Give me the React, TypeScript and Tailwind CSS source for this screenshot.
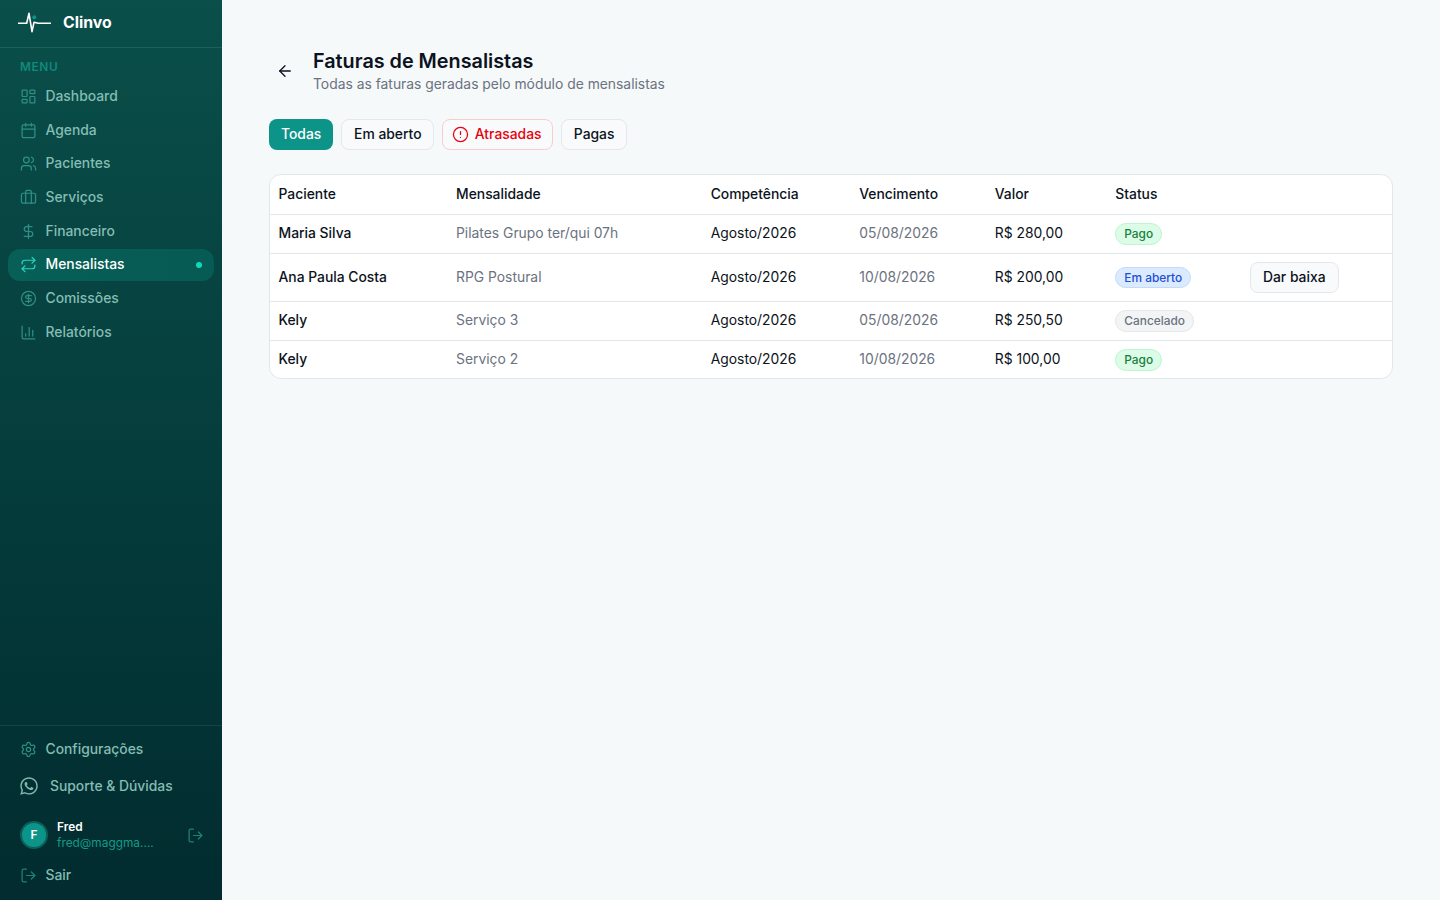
import { LayoutDashboard, Calendar, Users, Briefcase, DollarSign, Repeat, CircleDollarSign, ChartColumn, Settings, LogOut, ArrowLeft, CircleAlert } from "lucide-react";
import { FaWhatsapp } from "react-icons/fa";

const nav = [
  { label: "Dashboard", Icon: LayoutDashboard },
  { label: "Agenda", Icon: Calendar },
  { label: "Pacientes", Icon: Users },
  { label: "Serviços", Icon: Briefcase },
  { label: "Financeiro", Icon: DollarSign },
  { label: "Mensalistas", Icon: Repeat, active: true },
  { label: "Comissões", Icon: CircleDollarSign },
  { label: "Relatórios", Icon: ChartColumn },
];

const rows = [
  { p: "Maria Silva", m: "Pilates Grupo ter/qui 07h", v: "05/08/2026", val: "R$ 280,00", s: "Pago", h: "h-[39px]", t: "px-[8.5px]" },
  { p: "Ana Paula Costa", m: "RPG Postural", v: "10/08/2026", val: "R$ 200,00", s: "Em aberto", action: true, h: "h-[48px]", t: "px-[8.5px] pt-[1px]" },
  { p: "Kely", m: "Serviço 3", v: "05/08/2026", val: "R$ 250,50", s: "Cancelado", h: "h-[39px]", t: "px-[8.5px]" },
  { p: "Kely", m: "Serviço 2", v: "10/08/2026", val: "R$ 100,00", s: "Pago", h: "h-[38px]", t: "px-[8.5px] pt-[1px]" },
];

function Badge({ s }: { s: string }) {
  if (s === "Pago")
    return <span className="inline-flex h-[22px] items-center rounded-full border border-[#bbf7d0] bg-[#dcfce7] px-2 text-[11.88px] font-medium text-[#15803d]">{s}</span>;
  if (s === "Em aberto")
    return <span className="inline-flex h-[21px] items-center rounded-full border border-[#bfdbfe] bg-[#dbeafe] px-2 text-[11.88px] font-medium text-[#1d4ed8]">{s}</span>;
  return <span className="inline-flex h-[22px] items-center rounded-full border border-[#e5e7eb] bg-[#f3f4f6] px-2 text-[11.88px] font-medium text-[#6b7280]">{s}</span>;
}

export default function App() {
  return (
    <div className="flex h-[900px] w-[1440px] overflow-hidden bg-[#f6f9fa] font-['Inter',sans-serif] text-[#0b1220]">
      <aside className="flex h-full w-[222px] shrink-0 flex-col bg-gradient-to-b from-[#0a4f4a] to-[#022c2f]">
        <div className="flex h-[48px] items-center gap-3 border-b border-[#ffffff1a] pb-[1px] pl-[18px]">
          <svg width="33" height="22" viewBox="0 0 33 22" fill="none" stroke="white" strokeWidth="1.6" strokeLinejoin="round" strokeLinecap="round">
            <path d="M0.5 11.3H8.7L11 1.3L14 19.7L16 10.3L20.3 11.3H32.5" />
            <circle cx="16.3" cy="5.3" r="2" fill="#0d9488" stroke="none" />
          </svg>
          <span className="text-[15.84px] font-bold text-white">Clinvo</span>
        </div>
        <div className="px-2 pt-[11px]">
          <div className="mb-[5.7px] h-[16px] px-3 text-[11.88px] font-semibold leading-4 tracking-[0.6px] text-[#0f8a7c]">MENU</div>
          <nav className="flex flex-col gap-[2px]">
            {nav.map(({ label, Icon, active }) => (
              <div key={label} className={`flex h-[31.67px] items-center gap-[8.5px] rounded-xl pl-3 pr-3 text-[13.86px] font-medium ${active ? "bg-gradient-to-r from-[#075f57] to-[#065b54] text-white" : "text-[#84bdb3]"}`}>
                <Icon size={17} strokeWidth={1.75} className={active ? "text-[#2dd4bf]" : "text-[#2f8f84]"} />
                <span className="flex-1">{label}</span>
                {active && <span className="h-[6px] w-[6px] rounded-full bg-[#14d8b8]" />}
              </div>
            ))}
          </nav>
        </div>
        <div className="mt-auto border-t border-[#ffffff14] px-2 pt-[7px]">
          <div className="flex h-[32px] items-center gap-[8.5px] pl-3 text-[13.86px] font-medium text-[#84bdb3]">
            <Settings size={17} strokeWidth={1.75} className="text-[#2f8f84]" />
            Configurações
          </div>
          <div className="mt-[5px] flex h-[32px] items-center gap-[11px] pl-[11px] text-[13.86px] font-medium text-[#84bdb3]">
            <FaWhatsapp size={20} className="text-[#7fb8ae]" />
            Suporte &amp; Dúvidas
          </div>
          <div className="mt-[15px] flex h-[36px] items-center pl-[12px] pr-[10px]">
            <div className="flex h-[28px] w-[28px] items-center justify-center rounded-full border-2 border-[#0b5f58] bg-[#0d9488] text-[11.88px] font-semibold text-white">F</div>
            <div className="ml-[9px] flex-1 text-[11.88px] leading-4">
              <div className="font-semibold text-white">Fred</div>
              <div className="text-[#149a89]">fred@maggma....</div>
            </div>
            <LogOut size={17} strokeWidth={1.75} className="text-[#1f8176]" />
          </div>
          <div className="mt-[6px] mb-[9px] flex h-[32px] items-center gap-[8.5px] pl-3 text-[13.86px] font-medium text-[#84bdb3]">
            <LogOut size={17} strokeWidth={1.75} className="text-[#1f8176]" />
            Sair
          </div>
        </div>
      </aside>
      <main className="flex-1 pl-[47px] pr-[47px] pt-[47px]">
        <div className="flex items-center">
          <div className="flex w-[44px] items-center pl-[6.5px] pt-[1px]"><ArrowLeft size={18} strokeWidth={1.75} /></div>
          <div>
            <h1 className="text-[19.8px] font-semibold leading-[28px] text-[#0b1220]">Faturas de Mensalistas</h1>
            <p className="text-[13.86px] leading-[18px] text-[#6b7280]">Todas as faturas geradas pelo módulo de mensalistas</p>
          </div>
        </div>
        <div className="mt-[26px] flex items-center gap-[7.92px]">
          <button className="flex h-[31px] items-center rounded-lg bg-[#0d9488] px-[12px] text-[13.86px] font-medium text-white">Todas</button>
          <button className="flex h-[31px] items-center rounded-lg border border-[#e5e7eb] bg-[#f8fafc] px-[11.9px] text-[13.86px] font-medium">Em aberto</button>
          <button className="flex h-[31px] items-center gap-[5.5px] rounded-lg border border-[#fecaca] bg-[#f8fafc] pl-[9px] pr-[10.5px] text-[13.86px] font-medium text-[#e7000b]"><CircleAlert size={17} strokeWidth={1.75} />Atrasadas</button>
          <button className="flex h-[31px] items-center rounded-lg border border-[#e5e7eb] bg-[#f8fafc] px-[11.9px] text-[13.86px] font-medium">Pagas</button>
        </div>
        <div className="mt-[24px] w-[1124px] overflow-hidden rounded-xl border border-[#e2e8ea] bg-white">
          <table className="w-full table-fixed border-collapse text-[13.86px]">
            <colgroup>
              <col className="w-[177.5px]" />
              <col className="w-[254.7px]" />
              <col className="w-[148.6px]" />
              <col className="w-[135.5px]" />
              <col className="w-[120.5px]" />
              <col className="w-[134.7px]" />
              <col />
            </colgroup>
            <thead>
              <tr className="h-[39px] border-b border-[#e2e8ea]">
                {["Paciente", "Mensalidade", "Competência", "Vencimento", "Valor", "Status", ""].map((h, i) => (
                  <th key={i} className="px-[8.5px] pt-[1px] text-left font-medium">{h}</th>
                ))}
              </tr>
            </thead>
            <tbody>
              {rows.map((r, i) => (
                <tr key={i} className={`${r.h} ${i < rows.length - 1 ? "border-b border-[#e2e8ea]" : ""}`}>
                  <td className={`${r.t} font-medium`}>{r.p}</td>
                  <td className={`${r.t} text-[#6b7280]`}>{r.m}</td>
                  <td className={r.t}>Agosto/2026</td>
                  <td className={`${r.t} text-[#6b7280]`}>{r.v}</td>
                  <td className={r.t}>{r.val}</td>
                  <td className="px-[8.5px] pt-[1px]"><Badge s={r.s} /></td>
                  <td className="px-[8.5px] pt-[1px]">
                    {r.action && <button className="flex h-[31px] items-center rounded-lg border border-[#e5e7eb] bg-[#f8fafc] px-[12px] text-[13.86px] font-medium">Dar baixa</button>}
                  </td>
                </tr>
              ))}
            </tbody>
          </table>
        </div>
      </main>
    </div>
  );
}
